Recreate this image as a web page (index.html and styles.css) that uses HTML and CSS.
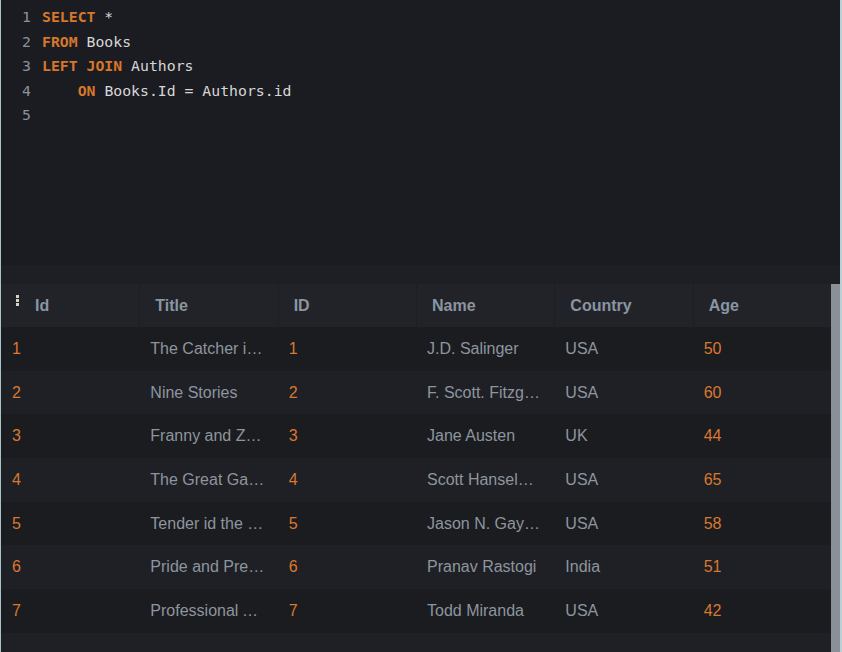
FILE: index.html
```html
<!DOCTYPE html>
<html>
<head>
<meta charset="utf-8">
<link rel="stylesheet" href="styles.css">
</head>
<body>
<div class="frame">
  <div class="editor">
    <div class="line"><span class="ln">1</span><span class="code"><span class="kw">SELECT</span> *</span></div>
    <div class="line"><span class="ln">2</span><span class="code"><span class="kw">FROM</span> Books</span></div>
    <div class="line"><span class="ln">3</span><span class="code"><span class="kw">LEFT JOIN</span> Authors</span></div>
    <div class="line"><span class="ln">4</span><span class="code">    <span class="kw">ON</span> Books.Id = Authors.id</span></div>
    <div class="line"><span class="ln">5</span><span class="code"></span></div>
  </div>
  <div class="strip"></div>
  <div class="results">
    <div class="grid">
      <div class="row head">
        <div class="cell"><span class="handle"><i></i><i></i><i></i></span>Id</div>
        <div class="cell">Title</div>
        <div class="cell">ID</div>
        <div class="cell">Name</div>
        <div class="cell">Country</div>
        <div class="cell">Age</div>
      </div>
      <div class="row">
        <div class="cell num">1</div><div class="cell">The Catcher in the Rye</div><div class="cell num">1</div><div class="cell">J.D. Salinger</div><div class="cell">USA</div><div class="cell num">50</div>
      </div>
      <div class="row alt">
        <div class="cell num">2</div><div class="cell">Nine Stories</div><div class="cell num">2</div><div class="cell">F. Scott. Fitzgerald</div><div class="cell">USA</div><div class="cell num">60</div>
      </div>
      <div class="row">
        <div class="cell num">3</div><div class="cell">Franny and Zooey</div><div class="cell num">3</div><div class="cell">Jane Austen</div><div class="cell">UK</div><div class="cell num">44</div>
      </div>
      <div class="row alt">
        <div class="cell num">4</div><div class="cell">The Great Gatsby</div><div class="cell num">4</div><div class="cell">Scott Hanselman</div><div class="cell">USA</div><div class="cell num">65</div>
      </div>
      <div class="row">
        <div class="cell num">5</div><div class="cell">Tender id the Night</div><div class="cell num">5</div><div class="cell">Jason N. Gaylord</div><div class="cell">USA</div><div class="cell num">58</div>
      </div>
      <div class="row alt">
        <div class="cell num">6</div><div class="cell">Pride and Prejudice</div><div class="cell num">6</div><div class="cell">Pranav Rastogi</div><div class="cell">India</div><div class="cell num">51</div>
      </div>
      <div class="row">
        <div class="cell num">7</div><div class="cell">Professional ASP.NET</div><div class="cell num">7</div><div class="cell">Todd Miranda</div><div class="cell">USA</div><div class="cell num">42</div>
      </div>
    </div>
    <div class="scrollbar"></div>
  </div>
</div>
</body>
</html>
```

FILE: styles.css
```css
html, body {
  margin: 0;
  padding: 0;
  background: #1c1d22;
}
.frame {
  width: 839px;
  height: 652px;
  border-left: 1px solid #a9c1c8;
  border-right: 2px solid #b9d0d6;
  display: flex;
  flex-direction: column;
  background: #1c1d22;
  overflow: hidden;
}
.editor {
  height: 265px;
  box-sizing: border-box;
  padding-top: 5px;
  background: #1b1c21;
  font-family: "DejaVu Sans Mono", "Liberation Mono", monospace;
  font-size: 14.8px;
}
.line {
  height: 24.5px;
  line-height: 24.5px;
  display: flex;
  white-space: pre;
}
.ln {
  width: 30px;
  text-align: right;
  color: #8a929b;
  padding-right: 11px;
}
.code {
  color: #d6d6d6;
}
.kw {
  color: #d7772c;
  font-weight: bold;
}
.strip {
  height: 19px;
  background: #1e1f24;
}
.results {
  flex: 1;
  display: flex;
  background: #1f2025;
}
.grid {
  flex: 1;
  display: flex;
  flex-direction: column;
  font-family: "Liberation Sans", Arial, sans-serif;
  font-size: 16px;
}
.row {
  display: grid;
  grid-template-columns: repeat(6, 1fr);
  height: 43.67px;
  background: #1b1c20;
}
.row.alt {
  background: #1f2025;
}
.cell {
  display: flex;
  align-items: center;
  padding: 0 11px;
  color: #8d959e;
  white-space: nowrap;
  overflow: hidden;
  min-width: 0;
}
.cell.num {
  color: #d9782e;
}
.row:not(.head) .cell {
  display: block;
  line-height: 43.67px;
  text-overflow: ellipsis;
}
.row.head {
  height: 43px;
  background: #222328;
}
.row.head .cell {
  padding: 0 15px;
  font-weight: bold;
  color: #8a95a2;
  border-left: 1px solid #1d1e22;
}
.row.head .cell:first-child {
  border-left: none;
  padding-left: 15px;
}
.handle {
  display: inline-flex;
  flex-direction: column;
  gap: 1px;
  margin-right: 16px;
  margin-top: -10px;
}
.handle i {
  display: block;
  width: 3px;
  height: 3px;
  background: #d9d2c6;
}
.scrollbar {
  width: 9px;
  background: #8b9097;
}
```
